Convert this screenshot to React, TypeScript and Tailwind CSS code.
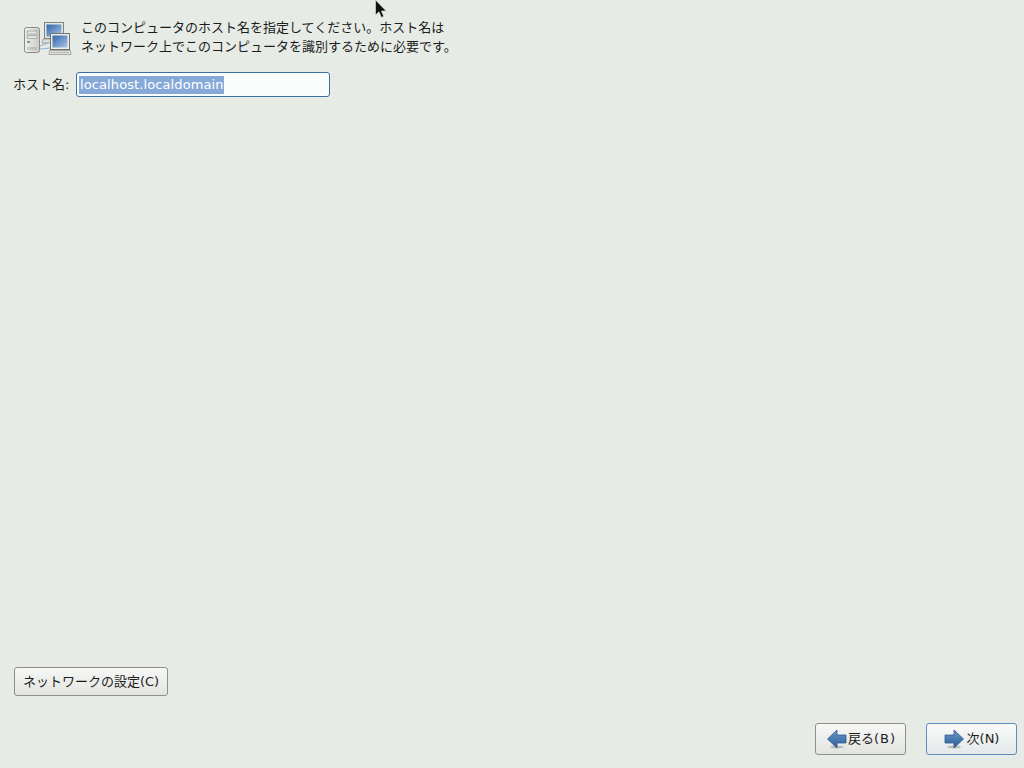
const font = { fontFamily: '"DejaVu Sans", "Noto Sans CJK JP", sans-serif' };

function NetworkIcon() {
  return (
    <svg width="50" height="36" viewBox="0 0 50 36" className="shrink-0">
      <defs>
        <linearGradient id="screen" x1="0" y1="0" x2="1" y2="1">
          <stop offset="0" stopColor="#2f66a8" />
          <stop offset="1" stopColor="#a9c6e4" />
        </linearGradient>
        <linearGradient id="tower" x1="0" y1="0" x2="1" y2="0">
          <stop offset="0" stopColor="#f1f2ee" />
          <stop offset="1" stopColor="#c9cbc4" />
        </linearGradient>
      </defs>
      {/* tower */}
      <rect x="2.5" y="8.5" width="15" height="25" rx="2" fill="url(#tower)" stroke="#8a8c85" />
      <rect x="5" y="12" width="10" height="3" fill="#e4e5e0" stroke="#9a9c95" strokeWidth="0.7" />
      <rect x="5" y="16.5" width="10" height="3" fill="#e4e5e0" stroke="#9a9c95" strokeWidth="0.7" />
      <rect x="5" y="22" width="3" height="2" fill="#8f918a" />
      <path d="M6 28v3M8 28v3M10 28v3M12 28v3M14 28v3" stroke="#9a9c95" strokeWidth="0.8" />
      {/* link */}
      <path d="M18 27l8-3M18 30l10-1" stroke="#8fb5dc" strokeWidth="1" />
      {/* back computer */}
      <rect x="22.5" y="3.5" width="19" height="16" fill="#e8e9e4" stroke="#7f817a" />
      <rect x="24.5" y="5.5" width="15" height="12" fill="url(#screen)" />
      <path d="M21 20h9v4h-10z" fill="#dcddd8" stroke="#8a8c85" strokeWidth="0.7" />
      {/* front computer */}
      <rect x="28.5" y="14.5" width="19" height="16" fill="#eeefea" stroke="#6f716a" />
      <rect x="30.5" y="16.5" width="15" height="12" fill="url(#screen)" />
      <path d="M27.5 31.5h21l.5 4H27z" fill="#e2e3de" stroke="#8a8c85" strokeWidth="0.7" />
      <path d="M29 33.5h18" stroke="#9a9c95" strokeWidth="1" strokeDasharray="1 0.6" />
    </svg>
  );
}

function ArrowIcon({ dir }: { dir: "left" | "right" }) {
  return (
    <svg width="20" height="20" viewBox="0 0 20 20" className="shrink-0">
      <defs>
        <linearGradient id={`arrow-${dir}`} x1="0" y1="0" x2="0" y2="1">
          <stop offset="0" stopColor="#6d97c6" />
          <stop offset="1" stopColor="#2a5d9c" />
        </linearGradient>
      </defs>
      <ellipse cx="10" cy="18" rx="7" ry="1.5" fill="#b9bcb7" />
      {dir === "left" ? (
        <path d="M0.5 10L10 1v5h9v8h-9v5z" fill={`url(#arrow-${dir})`} stroke="#2b5a94" strokeWidth="0.8" />
      ) : (
        <path d="M19.5 10L10 1v5H1v8h9v5z" fill={`url(#arrow-${dir})`} stroke="#2b5a94" strokeWidth="0.8" />
      )}
    </svg>
  );
}

export default function App() {
  return (
    <div
      className="relative flex h-[768px] w-[1024px] flex-col overflow-hidden bg-[#e6ebe6] text-[13px] text-[#1c1c1c]"
      style={font}
    >
      {/* mouse cursor */}
      <svg width="12" height="19" viewBox="0 0 12 19" className="absolute left-[375px] top-0">
        <path d="M0.5 0v15l3.5-3.2 2.4 5.6 2.4-1-2.4-5.4h4.8z" fill="#111" stroke="#e6ebe6" strokeWidth="0.6" />
      </svg>

      <div className="flex items-center pl-[22px] pt-[18px]">
        <NetworkIcon />
        <p className="ml-[9px] leading-[19px]">
          このコンピュータのホスト名を指定してください。ホスト名は
          <br />
          ネットワーク上でこのコンピュータを識別するために必要です。
        </p>
      </div>

      <div className="mt-[16px] flex items-center pl-[13px]">
        <label className="w-[63px]">ホスト名:</label>
        <div className="flex h-[25px] w-[254px] items-center rounded-[3px] border border-[#3e6ea6] bg-[#f9fdfb] pl-[2px]">
          <span className="bg-[#86a9d8] pl-px text-[13px] leading-[18px] tracking-[0.1px] text-white">
            localhost.localdomain
          </span>
        </div>
      </div>

      <div className="flex-1" />

      <div className="pl-[14px]">
        <button className="h-[29px] w-[154px] rounded-[3px] border border-[#8f8f8a] bg-gradient-to-b from-[#f7f8f6] to-[#e2e4e0]">
          ネットワークの設定(C)
        </button>
      </div>

      <div className="mb-[13px] mt-[27px] flex justify-end gap-[20px] pr-[7px]">
        <button className="flex h-[32px] w-[91px] items-center justify-center gap-px rounded-[3px] border border-[#8f8f8a] bg-gradient-to-b from-[#f7f8f6] to-[#e2e4e0] pl-[2px]">
          <ArrowIcon dir="left" />
          <span>
            戻る<span className="tracking-[1px]">(B)</span>
          </span>
        </button>
        <button className="flex h-[32px] w-[91px] items-center justify-center gap-[3px] rounded-[3px] border border-[#5f8cbf] bg-gradient-to-b from-[#f9fafa] to-[#e4e8e8]">
          <ArrowIcon dir="right" />
          次(N)
        </button>
      </div>
    </div>
  );
}
